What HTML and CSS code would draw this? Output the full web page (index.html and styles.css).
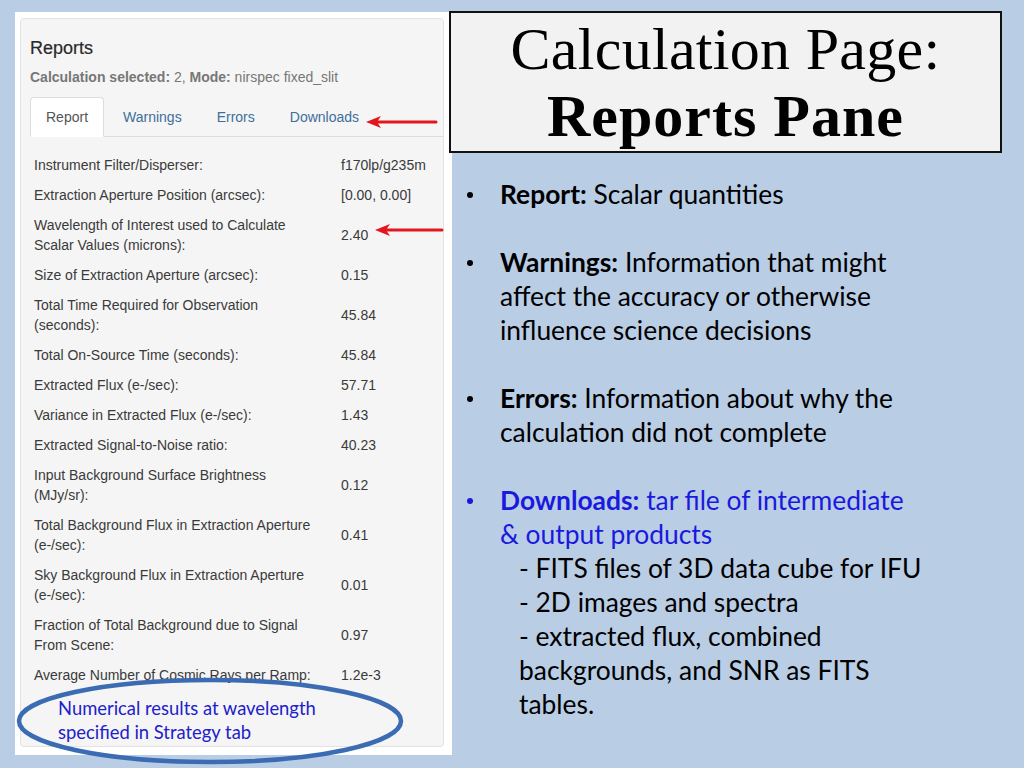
FILE: index.html
```html
<!DOCTYPE html>
<html>
<head>
<meta charset="utf-8">
<link rel="stylesheet" href="styles.css">
</head>
<body>
<div class="slide">
  <div class="shot">
    <div class="panel">
      <h2 class="panel-title">Reports</h2>
      <p class="selected"><b>Calculation selected:</b> 2, <b>Mode:</b> nirspec fixed_slit</p>
      <ul class="tabs">
        <li class="tab active">Report</li>
        <li class="tab">Warnings</li>
        <li class="tab">Errors</li>
        <li class="tab">Downloads</li>
      </ul>
      <table class="report">
        <tr><td class="lbl">Instrument Filter/Disperser:</td><td class="val">f170lp/g235m</td></tr>
        <tr><td class="lbl">Extraction Aperture Position (arcsec):</td><td class="val">[0.00, 0.00]</td></tr>
        <tr><td class="lbl">Wavelength of Interest used to Calculate<br>Scalar Values (microns):</td><td class="val">2.40</td></tr>
        <tr><td class="lbl">Size of Extraction Aperture (arcsec):</td><td class="val">0.15</td></tr>
        <tr><td class="lbl">Total Time Required for Observation<br>(seconds):</td><td class="val">45.84</td></tr>
        <tr><td class="lbl">Total On-Source Time (seconds):</td><td class="val">45.84</td></tr>
        <tr><td class="lbl">Extracted Flux (e-/sec):</td><td class="val">57.71</td></tr>
        <tr><td class="lbl">Variance in Extracted Flux (e-/sec):</td><td class="val">1.43</td></tr>
        <tr><td class="lbl">Extracted Signal-to-Noise ratio:</td><td class="val">40.23</td></tr>
        <tr><td class="lbl">Input Background Surface Brightness<br>(MJy/sr):</td><td class="val">0.12</td></tr>
        <tr><td class="lbl">Total Background Flux in Extraction Aperture<br>(e-/sec):</td><td class="val">0.41</td></tr>
        <tr><td class="lbl">Sky Background Flux in Extraction Aperture<br>(e-/sec):</td><td class="val">0.01</td></tr>
        <tr><td class="lbl">Fraction of Total Background due to Signal<br>From Scene:</td><td class="val">0.97</td></tr>
        <tr><td class="lbl">Average Number of Cosmic Rays per Ramp:</td><td class="val">1.2e-3</td></tr>
      </table>
    </div>
  </div>

  <div class="right">
    <div class="titlebox">
      <div class="t1">Calculation Page:</div>
      <div class="t2">Reports Pane</div>
    </div>
    <ul class="bullets">
      <li class="item"><span class="dot"></span><div class="txt"><b>Report:</b> Scalar quantities</div></li>
      <li class="item"><span class="dot"></span><div class="txt"><b>Warnings:</b> Information that might<br>affect the accuracy or otherwise<br>influence science decisions</div></li>
      <li class="item"><span class="dot"></span><div class="txt"><b>Errors:</b> Information about why the<br>calculation did not complete</div></li>
      <li class="item blue"><span class="dot"></span><div class="txt"><b>Downloads:</b> tar file of intermediate<br>&amp; output products
        <div class="sub">- FITS files of 3D data cube for IFU<br>- 2D images and spectra<br>- extracted flux, combined<br>backgrounds, and SNR as FITS<br>tables.</div></div></li>
    </ul>
  </div>
</div>

<svg class="arrow arrow1" width="76" height="16" viewBox="0 0 76 16">
  <line x1="12" y1="8" x2="72" y2="8" stroke="#e3161d" stroke-width="3" stroke-linecap="round"/>
  <polygon points="2,8 17,2 13,8 17,14" fill="#e3161d"/>
</svg>
<svg class="arrow arrow2" width="72" height="16" viewBox="0 0 72 16">
  <line x1="12" y1="8" x2="69" y2="8" stroke="#e3161d" stroke-width="3" stroke-linecap="round"/>
  <polygon points="2,8 17,2 13,8 17,14" fill="#e3161d"/>
</svg>

<div class="oval">
  <svg class="oval-shape" width="392" height="90" viewBox="0 0 392 90">
    <ellipse cx="195" cy="44" rx="191" ry="41" fill="none" stroke="#3b6bb2" stroke-width="4.5"/>
  </svg>
  <div class="oval-text">Numerical results at wavelength<br>specified in Strategy tab</div>
</div>
</body>
</html>
```

FILE: styles.css
```css
html, body {
  margin: 0;
  padding: 0;
}
body {
  width: 1024px;
  height: 768px;
  overflow: hidden;
  background: #b9cde5;
  position: relative;
  font-family: "Liberation Sans", Arial, sans-serif;
}
.slide {
  display: flex;
  align-items: flex-start;
  padding: 11px 0 0 15px;
}
.shot {
  margin-top: 1px;
  width: 437px;
  height: 743px;
  box-sizing: border-box;
  background: #ffffff;
  padding: 6px 8px 8px 5px;
}
.panel {
  height: 100%;
  box-sizing: border-box;
  background: #f5f5f5;
  border: 1px solid #e3e3e3;
  border-radius: 4px;
  padding: 19px 0 0 9px;
  color: #333;
}
.panel-title {
  margin: 0;
  font-size: 18px;
  line-height: 20px;
  font-weight: normal;
  color: #2a2a2a;
  -webkit-text-stroke: 0.2px #2a2a2a;
}
.selected {
  margin: 9px 0 0;
  font-size: 14px;
  line-height: 20px;
  color: #777;
}
.selected b {
  color: #777;
}
.tabs {
  list-style: none;
  margin: 10px 0 0;
  padding: 0;
  display: flex;
  gap: 3px;
  border-bottom: 1px solid #dddddd;
}
.tab {
  padding: 9px 15px;
  border: 1px solid transparent;
  border-radius: 4px 4px 0 0;
  font-size: 14px;
  line-height: 20px;
  color: #3e6f9c;
  margin-bottom: -1px;
}
.tab.active {
  background: #ffffff;
  border-color: #dddddd #dddddd transparent;
  color: #555;
}
.report {
  margin-top: 13px;
  border-collapse: collapse;
  font-size: 14px;
  line-height: 20px;
  color: #3a3a3a;
}
.report td {
  padding: 5px 4px;
  vertical-align: middle;
}
.report .lbl {
  width: 299px;
  white-space: nowrap;
}
.report .val {
  white-space: nowrap;
}

.right {
  position: relative;
  margin-left: -3px;
  width: 553px;
}
.titlebox {
  height: 142px;
  box-sizing: border-box;
  border: 2px solid #111;
  background: #f2f2f2;
  text-align: center;
  padding: 3px 0 1px;
  font-family: "Liberation Serif", "Times New Roman", serif;
  color: #000;
}
.t1 {
  font-size: 60px;
  line-height: 67px;
  letter-spacing: 0.3px;
}
.t2 {
  font-size: 60px;
  line-height: 67px;
  font-weight: bold;
  letter-spacing: 1px;
}
.bullets {
  list-style: none;
  margin: 24px 0 0;
  padding: 0;
  font-family: Lato, "Open Sans", sans-serif;
  font-size: 26.4px;
  line-height: 34px;
  color: #000;
}
.item {
  display: flex;
  align-items: flex-start;
  margin-bottom: 34px;
}
.dot {
  flex: none;
  width: 6px;
  height: 6px;
  border-radius: 50%;
  background: #000;
  margin: 15px 27px 0 18px;
}
.txt {
  white-space: nowrap;
}
.blue .txt {
  color: #1a1adf;
}
.blue .dot {
  background: #1a1adf;
}
.sub {
  color: #000;
  padding-left: 19px;
}

.arrow {
  position: absolute;
}
.arrow1 {
  left: 364px;
  top: 114px;
}
.arrow2 {
  left: 373px;
  top: 222px;
}
.oval {
  position: absolute;
  left: 15px;
  top: 677px;
  width: 392px;
  height: 90px;
}
.oval-shape {
  position: absolute;
  left: 0;
  top: 0;
}
.oval-text {
  position: relative;
  padding: 19px 0 0 43px;
  font-family: Lato, "Open Sans", sans-serif;
  font-size: 18.4px;
  line-height: 24px;
  color: #2020cc;
  white-space: nowrap;
}
```
